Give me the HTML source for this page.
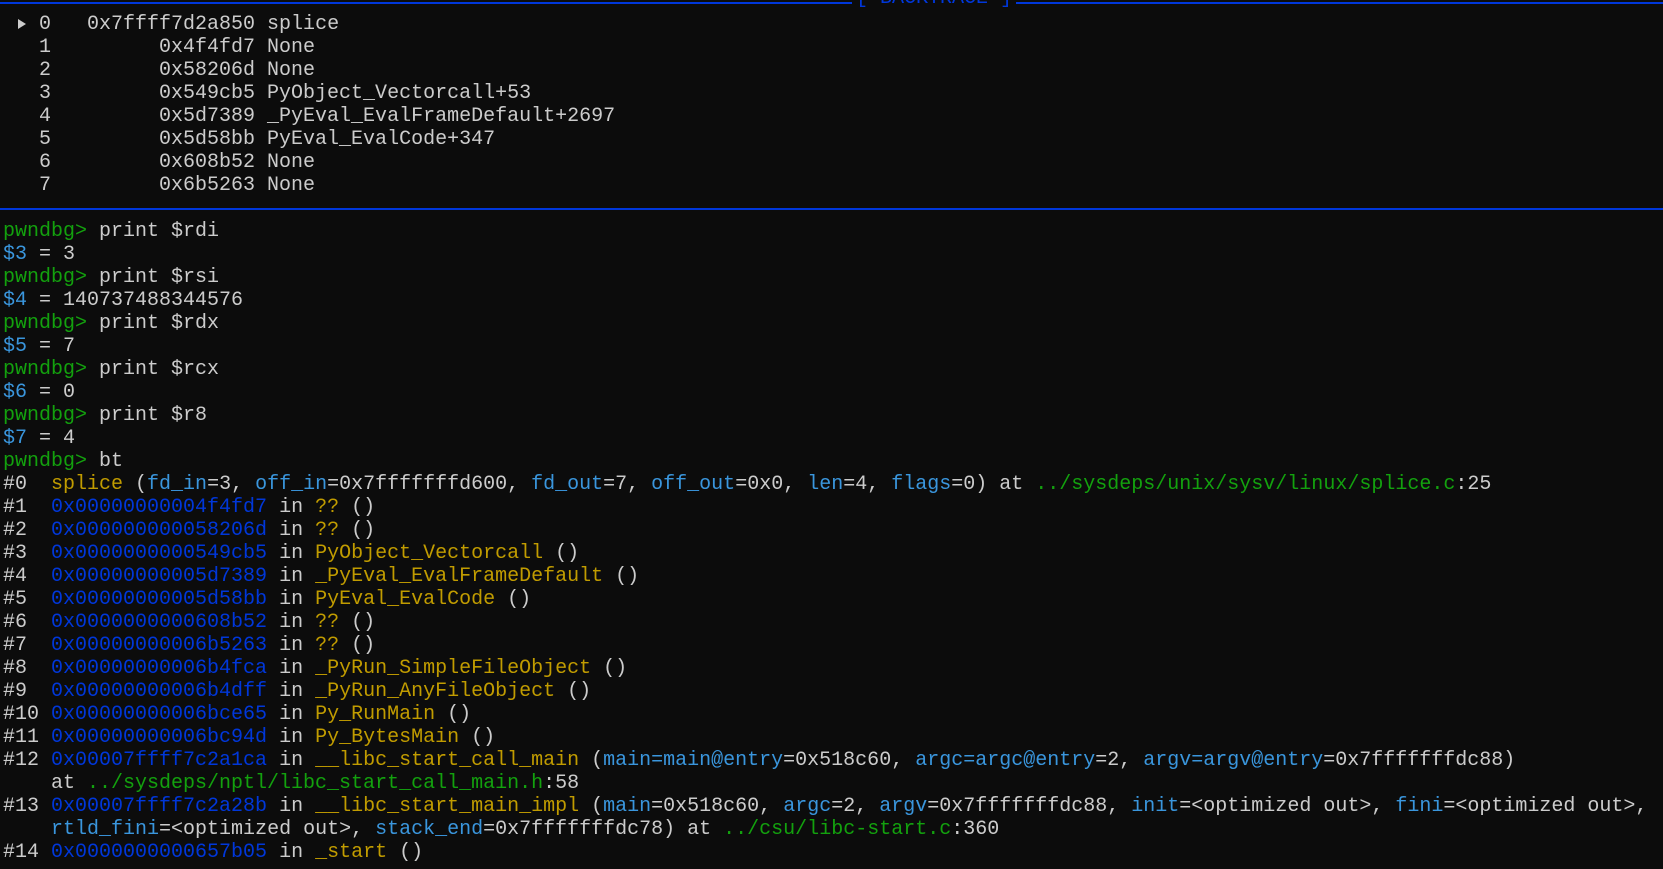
<!DOCTYPE html>
<html><head><meta charset="utf-8"><style>
html,body{margin:0;padding:0;background:#0c0c0c;width:1663px;height:869px;overflow:hidden}
pre{margin:0;position:absolute;left:3px;top:13px;font-family:"Liberation Mono","DejaVu Sans Mono",monospace;font-size:20px;line-height:23px;color:#cccccc;white-space:pre}
.g{color:#13a10e}.b{color:#0037da}.c{color:#3a96dd}.y{color:#c19c00}
.sep{position:absolute;left:0;width:1663px;height:2px;background:#0037da}
.ttl{position:absolute;top:-12px;left:852px;background:#0c0c0c;color:#0037da;font-family:"Liberation Mono",monospace;font-size:20px;padding:0 4px;line-height:22px}
.arr{display:inline-block;width:12px;height:10px;vertical-align:baseline;position:relative}
.arr:before{content:"";position:absolute;left:3px;top:0px;border-left:8px solid #cccccc;border-top:5px solid transparent;border-bottom:5px solid transparent}
</style></head><body>
<div class="sep" style="top:2px"></div>
<div class="ttl">[ BACKTRACE ]</div>
<div class="sep" style="top:208px"></div>
<pre>
 <span class="arr"></span> 0   0x7ffff7d2a850 splice
   1         0x4f4fd7 None
   2         0x58206d None
   3         0x549cb5 PyObject_Vectorcall+53
   4         0x5d7389 _PyEval_EvalFrameDefault+2697
   5         0x5d58bb PyEval_EvalCode+347
   6         0x608b52 None
   7         0x6b5263 None

<span class="g">pwndbg&gt;</span> print $rdi
<span class="c">$3</span> = 3
<span class="g">pwndbg&gt;</span> print $rsi
<span class="c">$4</span> = 140737488344576
<span class="g">pwndbg&gt;</span> print $rdx
<span class="c">$5</span> = 7
<span class="g">pwndbg&gt;</span> print $rcx
<span class="c">$6</span> = 0
<span class="g">pwndbg&gt;</span> print $r8
<span class="c">$7</span> = 4
<span class="g">pwndbg&gt;</span> bt
#0  <span class="y">splice</span> (<span class="c">fd_in</span>=3, <span class="c">off_in</span>=0x7fffffffd600, <span class="c">fd_out</span>=7, <span class="c">off_out</span>=0x0, <span class="c">len</span>=4, <span class="c">flags</span>=0) at <span class="g">../sysdeps/unix/sysv/linux/splice.c</span>:25
#1  <span class="b">0x00000000004f4fd7</span> in <span class="y">??</span> ()
#2  <span class="b">0x000000000058206d</span> in <span class="y">??</span> ()
#3  <span class="b">0x0000000000549cb5</span> in <span class="y">PyObject_Vectorcall</span> ()
#4  <span class="b">0x00000000005d7389</span> in <span class="y">_PyEval_EvalFrameDefault</span> ()
#5  <span class="b">0x00000000005d58bb</span> in <span class="y">PyEval_EvalCode</span> ()
#6  <span class="b">0x0000000000608b52</span> in <span class="y">??</span> ()
#7  <span class="b">0x00000000006b5263</span> in <span class="y">??</span> ()
#8  <span class="b">0x00000000006b4fca</span> in <span class="y">_PyRun_SimpleFileObject</span> ()
#9  <span class="b">0x00000000006b4dff</span> in <span class="y">_PyRun_AnyFileObject</span> ()
#10 <span class="b">0x00000000006bce65</span> in <span class="y">Py_RunMain</span> ()
#11 <span class="b">0x00000000006bc94d</span> in <span class="y">Py_BytesMain</span> ()
#12 <span class="b">0x00007ffff7c2a1ca</span> in <span class="y">__libc_start_call_main</span> (<span class="c">main=main@entry</span>=0x518c60, <span class="c">argc=argc@entry</span>=2, <span class="c">argv=argv@entry</span>=0x7fffffffdc88)
    at <span class="g">../sysdeps/nptl/libc_start_call_main.h</span>:58
#13 <span class="b">0x00007ffff7c2a28b</span> in <span class="y">__libc_start_main_impl</span> (<span class="c">main</span>=0x518c60, <span class="c">argc</span>=2, <span class="c">argv</span>=0x7fffffffdc88, <span class="c">init</span>=&lt;optimized out&gt;, <span class="c">fini</span>=&lt;optimized out&gt;,
    <span class="c">rtld_fini</span>=&lt;optimized out&gt;, <span class="c">stack_end</span>=0x7fffffffdc78) at <span class="g">../csu/libc-start.c</span>:360
#14 <span class="b">0x0000000000657b05</span> in <span class="y">_start</span> ()</pre>
</body></html>
